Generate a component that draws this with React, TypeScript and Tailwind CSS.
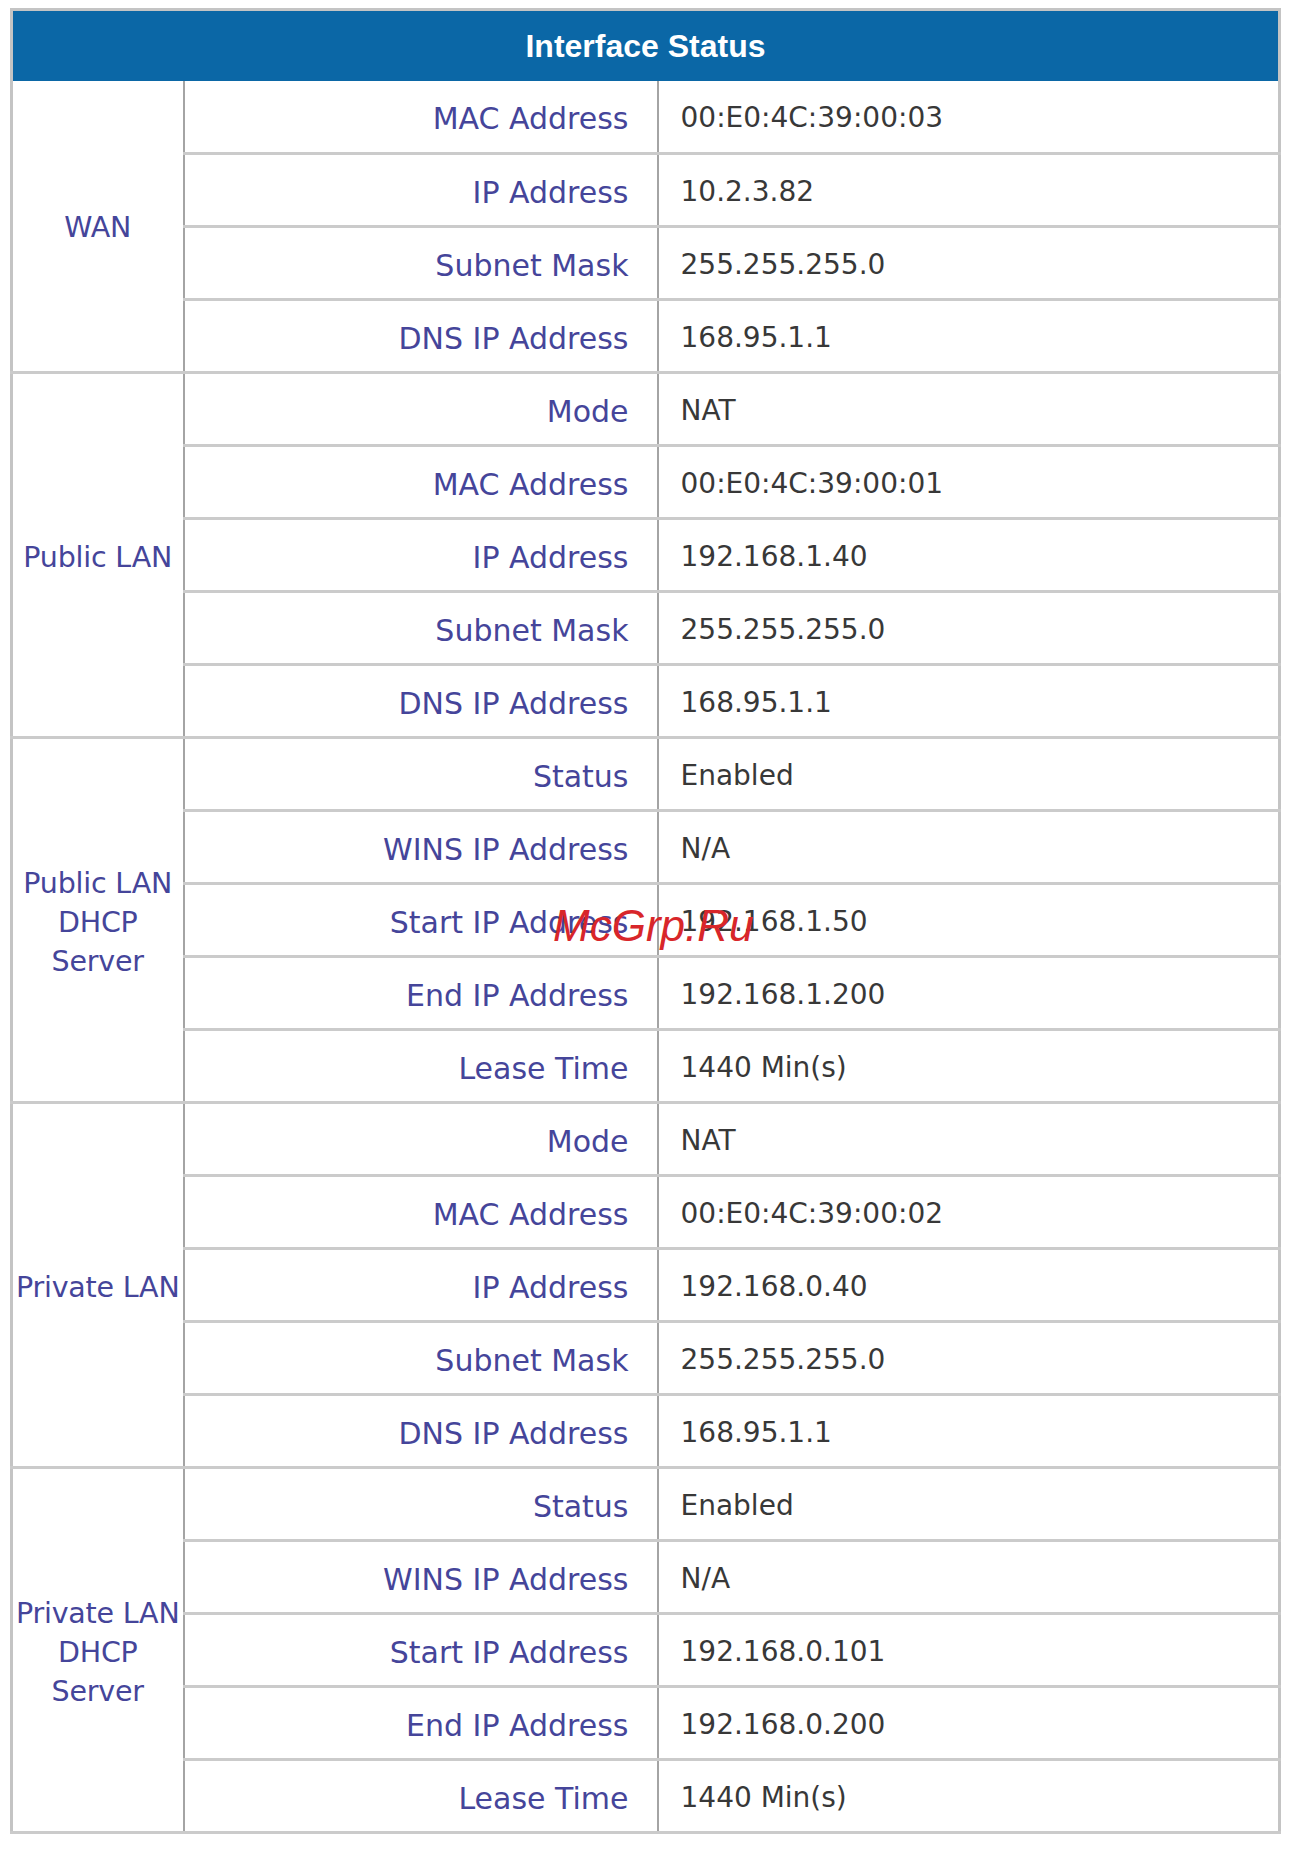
type Row = { label: string; value: string };
type Group = { name: string[]; rows: Row[] };

const groups: Group[] = [
  {
    name: ['WAN'],
    rows: [
      { label: 'MAC Address', value: '00:E0:4C:39:00:03' },
      { label: 'IP Address', value: '10.2.3.82' },
      { label: 'Subnet Mask', value: '255.255.255.0' },
      { label: 'DNS IP Address', value: '168.95.1.1' },
    ],
  },
  {
    name: ['Public LAN'],
    rows: [
      { label: 'Mode', value: 'NAT' },
      { label: 'MAC Address', value: '00:E0:4C:39:00:01' },
      { label: 'IP Address', value: '192.168.1.40' },
      { label: 'Subnet Mask', value: '255.255.255.0' },
      { label: 'DNS IP Address', value: '168.95.1.1' },
    ],
  },
  {
    name: ['Public LAN', 'DHCP', 'Server'],
    rows: [
      { label: 'Status', value: 'Enabled' },
      { label: 'WINS IP Address', value: 'N/A' },
      { label: 'Start IP Address', value: '192.168.1.50' },
      { label: 'End IP Address', value: '192.168.1.200' },
      { label: 'Lease Time', value: '1440 Min(s)' },
    ],
  },
  {
    name: ['Private LAN'],
    rows: [
      { label: 'Mode', value: 'NAT' },
      { label: 'MAC Address', value: '00:E0:4C:39:00:02' },
      { label: 'IP Address', value: '192.168.0.40' },
      { label: 'Subnet Mask', value: '255.255.255.0' },
      { label: 'DNS IP Address', value: '168.95.1.1' },
    ],
  },
  {
    name: ['Private LAN', 'DHCP', 'Server'],
    rows: [
      { label: 'Status', value: 'Enabled' },
      { label: 'WINS IP Address', value: 'N/A' },
      { label: 'Start IP Address', value: '192.168.0.101' },
      { label: 'End IP Address', value: '192.168.0.200' },
      { label: 'Lease Time', value: '1440 Min(s)' },
    ],
  },
];

export default function App() {
  return (
    <div className="relative min-h-[1851px] w-[1292px] bg-white pl-[10px] pt-[8px]">
      <table className="w-[1268px] table-fixed border-collapse border-[3px] border-[#c4c4c4] font-['DejaVu_Sans',sans-serif]">
        <colgroup>
          <col className="w-[172px]" />
          <col className="w-[474px]" />
          <col className="w-[622px]" />
        </colgroup>
        <thead>
          <tr className="h-[71px]">
            <th
              colSpan={3}
              className="bg-[#0b67a6] text-center font-['Liberation_Sans',sans-serif] text-[32px] font-bold text-white"
            >
              Interface Status
            </th>
          </tr>
        </thead>
        <tbody>
          {groups.map((g) =>
            g.rows.map((r, i) => (
              <tr key={g.name.join(' ') + r.label} className="h-[73px]">
                {i === 0 && (
                  <td
                    rowSpan={g.rows.length}
                    className="border-r-2 border-b-[3px] border-r-[#a4a4a4] border-b-[#cbcbcb] pt-[4px] text-center text-[28.5px] leading-[39px] tracking-[-0.2px] text-[#45459a]"
                  >
                    {g.name.map((n) => (
                      <div key={n} className="whitespace-nowrap">
                        {n}
                      </div>
                    ))}
                  </td>
                )}
                <td className="border-r-2 border-b-[3px] border-r-[#a4a4a4] border-b-[#cbcbcb] pr-[28px] pt-[4px] text-right text-[30px] text-[#45459a]">
                  {r.label}
                </td>
                <td className="border-b-[3px] border-b-[#cbcbcb] pl-[22px] pt-[4px] text-left text-[28px] text-[#383838]">
                  {r.value}
                </td>
              </tr>
            ))
          )}
        </tbody>
      </table>
      <div className="absolute left-[553px] top-[893px] font-['Liberation_Sans',sans-serif] text-[44px] italic text-[#d8262a]">
        McGrp.Ru
      </div>
    </div>
  );
}
